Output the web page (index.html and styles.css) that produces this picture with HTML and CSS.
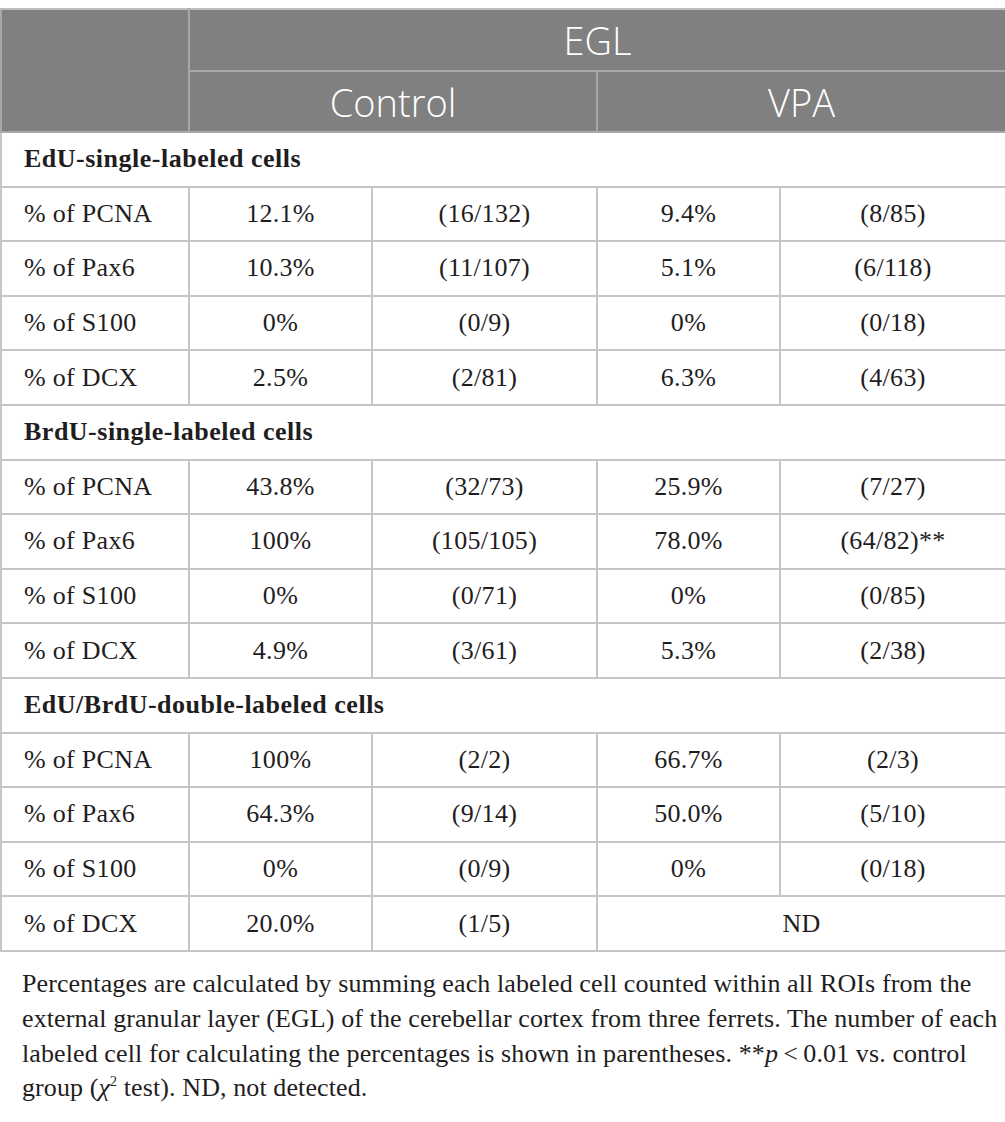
FILE: index.html
```html
<!DOCTYPE html>
<html lang="en">
<head>
<meta charset="utf-8">
<title>EGL labeled cells</title>
<link rel="stylesheet" href="styles.css">
</head>
<body>
<table class="data">
  <colgroup>
    <col class="c-label">
    <col class="c-pct">
    <col class="c-cnt">
    <col class="c-pct2">
    <col class="c-cnt2">
  </colgroup>
  <thead>
    <tr class="h1">
      <th rowspan="2" class="blank"></th>
      <th colspan="4">EGL</th>
    </tr>
    <tr class="h2">
      <th colspan="2">Control</th>
      <th colspan="2">VPA</th>
    </tr>
  </thead>
  <tbody>
    <tr class="sec"><td colspan="5">EdU-single-labeled cells</td></tr>
    <tr><td class="lab">% of PCNA</td><td>12.1%</td><td>(16/132)</td><td>9.4%</td><td>(8/85)</td></tr>
    <tr><td class="lab">% of Pax6</td><td>10.3%</td><td>(11/107)</td><td>5.1%</td><td>(6/118)</td></tr>
    <tr><td class="lab">% of S100</td><td>0%</td><td>(0/9)</td><td>0%</td><td>(0/18)</td></tr>
    <tr><td class="lab">% of DCX</td><td>2.5%</td><td>(2/81)</td><td>6.3%</td><td>(4/63)</td></tr>
    <tr class="sec"><td colspan="5">BrdU-single-labeled cells</td></tr>
    <tr><td class="lab">% of PCNA</td><td>43.8%</td><td>(32/73)</td><td>25.9%</td><td>(7/27)</td></tr>
    <tr><td class="lab">% of Pax6</td><td>100%</td><td>(105/105)</td><td>78.0%</td><td>(64/82)**</td></tr>
    <tr><td class="lab">% of S100</td><td>0%</td><td>(0/71)</td><td>0%</td><td>(0/85)</td></tr>
    <tr><td class="lab">% of DCX</td><td>4.9%</td><td>(3/61)</td><td>5.3%</td><td>(2/38)</td></tr>
    <tr class="sec"><td colspan="5">EdU/BrdU-double-labeled cells</td></tr>
    <tr><td class="lab">% of PCNA</td><td>100%</td><td>(2/2)</td><td>66.7%</td><td>(2/3)</td></tr>
    <tr><td class="lab">% of Pax6</td><td>64.3%</td><td>(9/14)</td><td>50.0%</td><td>(5/10)</td></tr>
    <tr><td class="lab">% of S100</td><td>0%</td><td>(0/9)</td><td>0%</td><td>(0/18)</td></tr>
    <tr><td class="lab">% of DCX</td><td>20.0%</td><td>(1/5)</td><td colspan="2">ND</td></tr>
  </tbody>
</table>
<p class="note">Percentages are calculated by summing each labeled cell counted within all ROIs from the<br>external granular layer (EGL) of the cerebellar cortex from three ferrets. The number of each<br>labeled cell for calculating the percentages is shown in parentheses. **<i>p</i>&#8201;&lt;&#8201;0.01 vs. control<br>group (<i>&chi;</i><sup>2</sup> test). ND, not detected.</p>
</body>
</html>
```

FILE: styles.css
```css
html, body {
  margin: 0;
  padding: 0;
  background: #ffffff;
}
body {
  padding-top: 8px;
  font-family: "Liberation Serif", "Times New Roman", serif;
  color: #1f1d1e;
}
.data {
  border-collapse: collapse;
  width: 1005px;
  table-layout: fixed;
}
.c-label { width: 188px; }
.c-pct { width: 183px; }
.c-cnt { width: 225px; }
.c-pct2 { width: 183px; }
.c-cnt2 { width: 226px; }

.data thead th {
  background: #7f807f;
  color: #ffffff;
  font-family: "Open Sans", "Liberation Sans", sans-serif;
  font-weight: 300;
  font-size: 38px;
  text-align: center;
  padding: 0;
  border: 2px solid #a8a8a8;
  border-top-color: #bdbdbd;
}
.data thead .h1 th { height: 60px; }
.data thead .h2 th { height: 59px; }

.data tbody td {
  border: 2px solid #c6c6c6;
  height: 54.6px;
  padding: 0;
  text-align: center;
  font-size: 26px;
  letter-spacing: 0.3px;
  box-sizing: border-box;
}
.data tbody td.lab {
  text-align: left;
  padding-left: 22px;
}
.data tbody tr.sec td {
  text-align: left;
  padding-left: 22px;
  font-weight: bold;
  letter-spacing: 0.5px;
}
.note {
  margin: 15px 0 0 0;
  padding-left: 22px;
  font-size: 26px;
  line-height: 34.8px;
  letter-spacing: 0.1px;
}
.note sup {
  font-size: 14px;
  vertical-align: 10px;
  line-height: 0;
}
```
